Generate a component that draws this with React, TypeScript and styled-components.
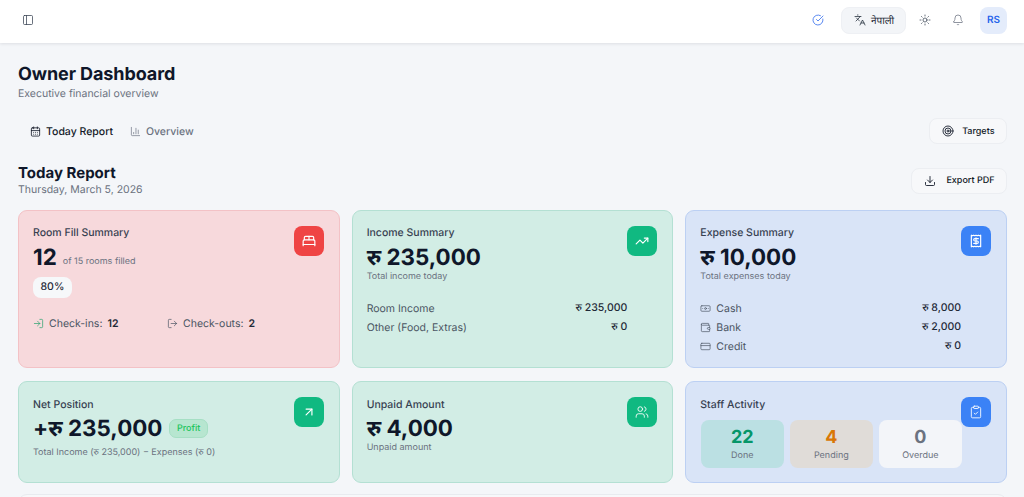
import styled, { createGlobalStyle } from "styled-components";
import {
  ArrowUpRight,
  Banknote,
  BarChart3,
  BedDouble,
  Bell,
  CalendarDays,
  ClipboardCheck,
  CircleCheckBig,
  CreditCard,
  Download,
  Languages,
  LogIn,
  LogOut,
  PanelLeft,
  Receipt,
  Sun,
  Target,
  TrendingUp,
  Users,
  Wallet,
} from "lucide-react";

const GlobalStyle = createGlobalStyle`
  html, body {
    margin: 0;
    height: 100%;
    overflow: hidden;
    background: #f4f6f9;
    font-family: Inter, "Noto Sans", "Noto Sans Devanagari", sans-serif;
    color: #111827;
    text-rendering: geometricPrecision;
  }
  * { box-sizing: border-box; }
`;

const tones = {
  red: { bg: "#f7d9dc", border: "#f3c2c6", icon: "#ef4444" },
  green: { bg: "#d2ede5", border: "#b4e0d3", icon: "#10b981" },
  blue: { bg: "#d9e4f7", border: "#bcd0f3", icon: "#3b82f6" },
};

type Tone = keyof typeof tones;

const Page = styled.div`
  width: 1024px;
  height: 497px;
  overflow: hidden;
`;

const TopBar = styled.header`
  display: flex;
  align-items: center;
  height: 43px;
  padding: 0 17px 3px 18px;
  background: #fff;
  box-shadow: 0 1px 3px rgba(15, 23, 42, 0.1);
`;

const IconSlot = styled.span<{ $color?: string }>`
  display: flex;
  align-items: center;
  justify-content: center;
  color: ${(p) => p.$color ?? "#374151"};
`;

const SidebarSlot = styled(IconSlot)`
  margin-left: 4px;
`;

const TopRight = styled.div`
  display: flex;
  align-items: center;
  margin-left: auto;
`;

const LangButton = styled.div`
  display: flex;
  align-items: center;
  gap: 5px;
  width: 65px;
  height: 27px;
  margin: 0 13px 0 17px;
  padding-left: 12px;
  border-radius: 8px;
  background: #f3f5f8;
  border: 1px solid #eef0f4;
  font-size: 10px;
  color: #1f2937;
`;

const BellSlot = styled(IconSlot)`
  margin: 0 16px 0 21px;
  color: #6b7280;
`;

const Avatar = styled.div`
  display: flex;
  align-items: center;
  justify-content: center;
  width: 27px;
  height: 27px;
  border-radius: 8px;
  background: #e4ecfb;
  color: #2563eb;
  font-size: 10px;
  font-weight: 600;
`;

const Main = styled.main`
  padding: 22px 17px 0 18px;
`;

const Title = styled.h1`
  margin: 0;
  font-size: 18px;
  line-height: 20px;
  font-weight: 700;
  letter-spacing: -0.1px;
  color: #0f172a;
`;

const Subtitle = styled.p`
  margin: 1px 0 0;
  font-size: 10.5px;
  line-height: 15px;
  color: #6b7280;
`;

const TabRow = styled.div`
  display: flex;
  align-items: center;
  justify-content: space-between;
  margin-top: 17px;
`;

const Tabs = styled.div`
  display: flex;
  align-items: center;
  gap: 17px;
  padding-left: 12px;
`;

const Tab = styled.div<{ $active?: boolean }>`
  display: flex;
  align-items: center;
  gap: 5px;
  font-size: 10.5px;
  font-weight: 500;
  color: ${(p) => (p.$active ? "#111827" : "#6b7280")};
`;

const OutlineButton = styled.div<{ $gap: number }>`
  display: flex;
  align-items: center;
  height: 26px;
  padding: 0 11.5px 0 12px;
  gap: ${(p) => p.$gap}px;
  border-radius: 8px;
  background: #f7f8fa;
  border: 1px solid #eceef2;
  font-size: 9px;
  font-weight: 500;
  color: #111827;
`;

const ReportRow = styled.div`
  display: flex;
  align-items: center;
  justify-content: space-between;
  margin-top: 20px;
`;

const ReportTitle = styled.h2`
  margin: 0;
  font-size: 15px;
  line-height: 18px;
  font-weight: 700;
  color: #0f172a;
`;

const ReportDate = styled.div`
  margin-top: 1px;
  font-size: 10.5px;
  line-height: 14px;
  color: #6b7280;
`;

const Grid = styled.div`
  display: grid;
  grid-template-columns: repeat(3, minmax(0, 1fr));
  grid-template-rows: 158px 102px;
  gap: 13px 12px;
  margin-top: 13px;
`;

const Card = styled.section<{ $tone: Tone }>`
  display: flex;
  padding: 15px 15px 15px 14px;
  border-radius: 9px;
  background: ${(p) => tones[p.$tone].bg};
  border: 1px solid ${(p) => tones[p.$tone].border};
`;

const CardBody = styled.div`
  flex: 1;
  min-width: 0;
`;

const IconBox = styled.div<{ $tone: Tone }>`
  display: flex;
  align-items: center;
  justify-content: center;
  flex: none;
  width: 30px;
  height: 30px;
  border-radius: 8px;
  background: ${(p) => tones[p.$tone].icon};
  color: #fff;
`;

const CardTitle = styled.div`
  font-size: 10.5px;
  line-height: 14px;
  font-weight: 500;
  color: #374151;
`;

const LowerCardTitle = styled(CardTitle)`
  margin: 1px 0 -1.5px;
`;

const BigLine = styled.div`
  display: flex;
  align-items: center;
  gap: 6px;
  margin-top: 6px;
  height: 24px;
`;

const BigValue = styled.span`
  font-size: 22.4px;
  line-height: 24px;
  font-weight: 700;
  color: #0f172a;
  white-space: nowrap;
`;

const Hint = styled.div`
  font-size: 9px;
  line-height: 12px;
  color: #6b7280;
`;

const FillHint = styled(Hint)`
  margin-top: 1px;
`;

const RoomsHint = styled(Hint)`
  align-self: flex-end;
  margin-bottom: 2px;
`;

const PercentPill = styled.div`
  display: inline-block;
  margin-top: 7px;
  padding: 0 7.5px;
  height: 20.5px;
  line-height: 20.5px;
  border-radius: 8px;
  background: #f6f8fa;
  font-size: 10.5px;
  font-weight: 500;
  color: #1f2937;
`;

const CheckRow = styled.div`
  display: flex;
  margin-top: 19px;
`;

const CheckItem = styled.div`
  display: flex;
  align-items: center;
  flex: none;
  width: 134px;
  gap: 5px;
  font-size: 10.5px;
  color: #4b5563;
  b {
    font-weight: 600;
    color: #1f2937;
  }
`;

const Rows = styled.div`
  display: flex;
  flex-direction: column;
  gap: 5px;
  margin-top: 18px;
`;

const Row = styled.div`
  display: flex;
  align-items: center;
  justify-content: space-between;
  height: 14px;
  font-size: 10.5px;
  color: #4b5563;
`;

const RowLabel = styled.span`
  display: flex;
  align-items: center;
  gap: 5px;
`;

const RowValue = styled.span`
  font-weight: 500;
  color: #1f2937;
`;

const ProfitPill = styled.span`
  margin-left: 1px;
  padding: 0 6.5px;
  height: 19px;
  line-height: 18px;
  border-radius: 7px;
  background: #b7e6d0;
  border: 1px solid #a6dfc4;
  font-size: 9px;
  font-weight: 500;
  color: #22c55e;
`;

const NetHint = styled(Hint)`
  margin-top: 6.5px;
`;

const Stats = styled.div`
  display: grid;
  grid-template-columns: repeat(3, 83px);
  gap: 6px;
  margin-top: 9.5px;
  padding-left: 0.5px;
`;

const Stat = styled.div<{ $bg: string }>`
  height: 48px;
  padding-top: 7px;
  border-radius: 8px;
  background: ${(p) => p.$bg};
  text-align: center;
`;

const StatNum = styled.div<{ $color: string }>`
  font-size: 18px;
  line-height: 22px;
  font-weight: 700;
  color: ${(p) => p.$color};
`;

const StatLabel = styled.div`
  margin-top: 1px;
  font-size: 9px;
  line-height: 12px;
  color: #6b7280;
`;

const NextPanel = styled.div`
  height: 20px;
  margin-top: 11px;
  border-radius: 9px 9px 0 0;
  background: #f7f8fa;
  border: 1px solid #e8ebef;
`;

export default function App() {
  return (
    <Page>
      <GlobalStyle />
      <TopBar>
        <SidebarSlot>
          <PanelLeft size={12} strokeWidth={1.5} />
        </SidebarSlot>
        <TopRight>
          <IconSlot $color="#2563eb">
            <CircleCheckBig size={12} strokeWidth={1.5} />
          </IconSlot>
          <LangButton>
            <Languages size={12} strokeWidth={1.5} />
            नेपाली
          </LangButton>
          <IconSlot>
            <Sun size={12} strokeWidth={1.5} />
          </IconSlot>
          <BellSlot>
            <Bell size={12} strokeWidth={1.5} />
          </BellSlot>
          <Avatar>RS</Avatar>
        </TopRight>
      </TopBar>
      <Main>
        <Title>Owner Dashboard</Title>
        <Subtitle>Executive financial overview</Subtitle>
        <TabRow>
          <Tabs>
            <Tab $active>
              <CalendarDays size={11} strokeWidth={1.75} />
              Today Report
            </Tab>
            <Tab>
              <BarChart3 size={11} strokeWidth={1.5} />
              Overview
            </Tab>
          </Tabs>
          <OutlineButton $gap={8.5}>
            <Target size={12} strokeWidth={1.75} />
            Targets
          </OutlineButton>
        </TabRow>
        <ReportRow>
          <div>
            <ReportTitle>Today Report</ReportTitle>
            <ReportDate>Thursday, March 5, 2026</ReportDate>
          </div>
          <OutlineButton $gap={10}>
            <Download size={12} strokeWidth={1.75} />
            Export PDF
          </OutlineButton>
        </ReportRow>
        <Grid>
          <Card $tone="red">
            <CardBody>
              <CardTitle>Room Fill Summary</CardTitle>
              <BigLine>
                <BigValue>12</BigValue>
                <RoomsHint>of 15 rooms filled</RoomsHint>
              </BigLine>
              <PercentPill>80%</PercentPill>
              <CheckRow>
                <CheckItem>
                  <LogIn size={11} color="#22a06b" strokeWidth={1.5} />
                  Check-ins: <b>12</b>
                </CheckItem>
                <CheckItem>
                  <LogOut size={11} strokeWidth={1.5} />
                  Check-outs: <b>2</b>
                </CheckItem>
              </CheckRow>
            </CardBody>
            <IconBox $tone="red">
              <BedDouble size={14} strokeWidth={2} />
            </IconBox>
          </Card>
          <Card $tone="green">
            <CardBody>
              <CardTitle>Income Summary</CardTitle>
              <BigLine>
                <BigValue>रु 235,000</BigValue>
              </BigLine>
              <FillHint>Total income today</FillHint>
              <Rows>
                <Row>
                  <span>Room Income</span>
                  <RowValue>रु 235,000</RowValue>
                </Row>
                <Row>
                  <span>Other (Food, Extras)</span>
                  <RowValue>रु 0</RowValue>
                </Row>
              </Rows>
            </CardBody>
            <IconBox $tone="green">
              <TrendingUp size={14} strokeWidth={2} />
            </IconBox>
          </Card>
          <Card $tone="blue">
            <CardBody>
              <CardTitle>Expense Summary</CardTitle>
              <BigLine>
                <BigValue>रु 10,000</BigValue>
              </BigLine>
              <FillHint>Total expenses today</FillHint>
              <Rows>
                <Row>
                  <RowLabel>
                    <Banknote size={11} strokeWidth={1.5} />
                    Cash
                  </RowLabel>
                  <RowValue>रु 8,000</RowValue>
                </Row>
                <Row>
                  <RowLabel>
                    <Wallet size={11} strokeWidth={1.5} />
                    Bank
                  </RowLabel>
                  <RowValue>रु 2,000</RowValue>
                </Row>
                <Row>
                  <RowLabel>
                    <CreditCard size={11} strokeWidth={1.5} />
                    Credit
                  </RowLabel>
                  <RowValue>रु 0</RowValue>
                </Row>
              </Rows>
            </CardBody>
            <IconBox $tone="blue">
              <Receipt size={14} strokeWidth={2} />
            </IconBox>
          </Card>
          <Card $tone="green">
            <CardBody>
              <LowerCardTitle>Net Position</LowerCardTitle>
              <BigLine>
                <BigValue>+रु 235,000</BigValue>
                <ProfitPill>Profit</ProfitPill>
              </BigLine>
              <NetHint>Total Income (रु 235,000) − Expenses (रु 0)</NetHint>
            </CardBody>
            <IconBox $tone="green">
              <ArrowUpRight size={14} strokeWidth={2} />
            </IconBox>
          </Card>
          <Card $tone="green">
            <CardBody>
              <LowerCardTitle>Unpaid Amount</LowerCardTitle>
              <BigLine>
                <BigValue>रु 4,000</BigValue>
              </BigLine>
              <FillHint>Unpaid amount</FillHint>
            </CardBody>
            <IconBox $tone="green">
              <Users size={14} strokeWidth={1.5} />
            </IconBox>
          </Card>
          <Card $tone="blue">
            <CardBody>
              <LowerCardTitle>Staff Activity</LowerCardTitle>
              <Stats>
                <Stat $bg="#bbe0e3">
                  <StatNum $color="#059669">22</StatNum>
                  <StatLabel>Done</StatLabel>
                </Stat>
                <Stat $bg="#e0dcd8">
                  <StatNum $color="#d97706">4</StatNum>
                  <StatLabel>Pending</StatLabel>
                </Stat>
                <Stat $bg="#f3f5f9">
                  <StatNum $color="#6b7280">0</StatNum>
                  <StatLabel>Overdue</StatLabel>
                </Stat>
              </Stats>
            </CardBody>
            <IconBox $tone="blue">
              <ClipboardCheck size={14} strokeWidth={1.5} />
            </IconBox>
          </Card>
        </Grid>
        <NextPanel />
      </Main>
    </Page>
  );
}
